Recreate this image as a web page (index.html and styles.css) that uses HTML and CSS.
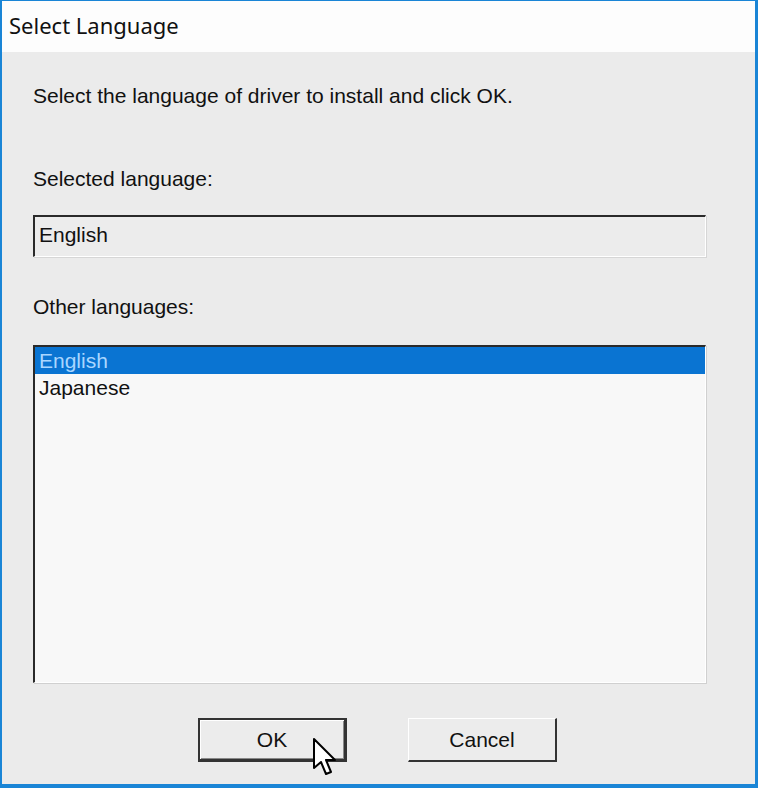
FILE: index.html
```html
<!DOCTYPE html>
<html>
<head>
<meta charset="utf-8">
<link rel="stylesheet" href="styles.css">
</head>
<body>
<div class="window">
  <div class="titlebar">Select Language</div>
  <div class="content">
    <p class="instr">Select the language of driver to install and click OK.</p>
    <p class="label label-sel">Selected language:</p>
    <div class="field">English</div>
    <p class="label label-other">Other languages:</p>
    <div class="listbox">
      <div class="item selected">English</div>
      <div class="item">Japanese</div>
    </div>
    <div class="buttons">
      <div class="btn default">OK
        <svg class="cursor" width="36" height="42" viewBox="0 0 36 42">
          <path d="M2 2 L2 31 L9 25 L14 37 L19 35 L14 23 L23 23 Z" fill="#fff" stroke="#000" stroke-width="2" stroke-linejoin="round"/>
        </svg>
      </div>
      <div class="btn">Cancel</div>
    </div>
  </div>
</div>
</body>
</html>
```
FILE: styles.css
```css
html, body {
  margin: 0;
  padding: 0;
  background: #ececec;
}
.window {
  width: 758px;
  height: 788px;
  box-sizing: border-box;
  border-left: 2px solid #1a85d6;
  border-right: 3px solid #1a85d6;
  border-top: 1px solid #1a85d6;
  border-bottom: 4px solid #1a85d6;
  background: #ebebeb;
  display: flex;
  flex-direction: column;
}
.titlebar {
  height: 51px;
  background: #fdfdfd;
  font-family: "Noto Sans", "Open Sans", sans-serif;
  font-size: 22px;
  color: #111;
  padding-left: 7px;
  line-height: 48px;
  box-sizing: border-box;
}
.content {
  flex: 1;
  padding: 0 49px 0 31px;
  font-family: "Liberation Sans", Arial, sans-serif;
  font-size: 21px;
  color: #111;
  display: flex;
  flex-direction: column;
}
p { margin: 0; line-height: 24px; }
.instr { margin-top: 32px; }
.label-sel { margin-top: 59px; }
.field {
  margin-top: 24px;
  height: 42px;
  box-sizing: border-box;
  border-top: 2px solid #2a2a2a;
  border-left: 2px solid #2a2a2a;
  border-right: 1px solid #fff;
  border-bottom: 1px solid #fff;
  box-shadow: 1px 1px 0 #d6d6d6;
  padding-left: 4px;
  line-height: 36px;
  background: #ececec;
}
.label-other { margin-top: 38px; }
.listbox {
  margin-top: 26px;
  height: 338px;
  box-sizing: border-box;
  border-top: 2px solid #2a2a2a;
  border-left: 2px solid #2a2a2a;
  border-right: 1px solid #fff;
  border-bottom: 1px solid #fff;
  box-shadow: 1px 1px 0 #d0d0d0;
  background: #f8f8f8;
}
.item {
  height: 27px;
  line-height: 28px;
  padding-left: 4px;
}
.item.selected {
  background: #0a74d2;
  color: #a9d6ff;
}
.buttons {
  margin-top: 35px;
  display: flex;
  gap: 61px;
  padding-left: 165px;
}
.btn {
  position: relative;
  width: 149px;
  height: 44px;
  box-sizing: border-box;
  border-top: 1px solid #fff;
  border-left: 1px solid #fff;
  border-right: 2px solid #333;
  border-bottom: 2px solid #333;
  background: #ececec;
  display: flex;
  align-items: center;
  justify-content: center;
  font-size: 21px;
}
.btn.default {
  border: 2px solid #333;
  border-bottom-width: 3px;
  border-right-width: 3px;
  box-shadow: inset 1px 1px 0 #fff, inset -1px -1px 0 #888;
}
.cursor {
  position: absolute;
  left: 112px;
  top: 17px;
}
```
